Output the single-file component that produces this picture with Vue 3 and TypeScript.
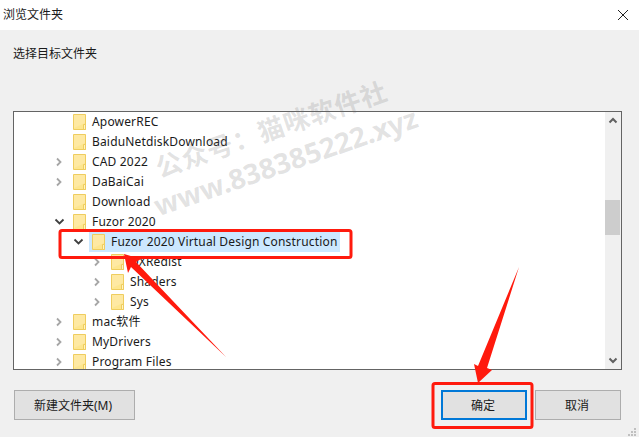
<script setup lang="ts">
interface Row { label: string; level: number; state: 'none' | 'closed' | 'open'; selected?: boolean }
const rows: Row[] = [
  { label: 'ApowerREC', level: 0, state: 'none' },
  { label: 'BaiduNetdiskDownload', level: 0, state: 'none' },
  { label: 'CAD 2022', level: 0, state: 'closed' },
  { label: 'DaBaiCai', level: 0, state: 'closed' },
  { label: 'Download', level: 0, state: 'none' },
  { label: 'Fuzor 2020', level: 0, state: 'open' },
  { label: 'Fuzor 2020 Virtual Design Construction', level: 1, state: 'open', selected: true },
  { label: 'DXRedist', level: 2, state: 'closed' },
  { label: 'Shaders', level: 2, state: 'closed' },
  { label: 'Sys', level: 2, state: 'closed' },
  { label: 'mac软件', level: 0, state: 'closed' },
  { label: 'MyDrivers', level: 0, state: 'closed' },
  { label: 'Program Files', level: 0, state: 'closed' },
]
const indent = (r: Row) => ({ paddingLeft: `${r.level * 19}px` })
</script>

<template>
  <div class="dialog">
    <header class="titlebar">
      <span class="title">浏览文件夹</span>
      <svg class="close" width="12" height="12" viewBox="0 0 12 12"><path d="M1 1 11 11M11 1 1 11" stroke="#222" stroke-width="1" fill="none" /></svg>
    </header>
    <main class="body">
      <p class="prompt">选择目标文件夹</p>
      <section class="tree">
        <div class="rows">
          <div v-for="r in rows" :key="r.label" class="row" :style="indent(r)">
            <span class="arrow">
              <svg v-if="r.state === 'closed'" width="9" height="10" viewBox="0 0 9 10"><path d="M2 1.5 5.5 5 2 8.5" stroke="#a6a6a6" stroke-width="1.8" fill="none" /></svg>
              <svg v-else-if="r.state === 'open'" width="11" height="8" viewBox="0 0 11 8"><path d="M1.5 1.5 5.5 5.5 9.5 1.5" stroke="#404040" stroke-width="1.8" fill="none" /></svg>
            </span>
            <span class="item" :class="{ selected: r.selected }">
              <svg class="folder" width="13" height="16" viewBox="0 0 13 16">
                <path d="M.5 .5H12.5V15.5H.5Z" fill="#fde68f" stroke="#efcd5f" />
                <path d="M1 1H12V9L1 14Z" fill="#fee9a3" />
                <path d="M10.5 15.5V10.5H12.5V15.5Z" fill="#fff3c4" stroke="#efcd5f" />
              </svg>
              <span class="label">{{ r.label }}</span>
            </span>
          </div>
        </div>
        <div class="scrollbar">
          <svg class="cap" width="16" height="17" viewBox="0 0 16 17"><path d="M4.5 10.5 8 7 11.5 10.5" stroke="#606060" stroke-width="2" fill="none" /></svg>
          <div class="track"><div class="thumb"></div></div>
          <svg class="cap" width="16" height="17" viewBox="0 0 16 17"><path d="M4.5 6.5 8 10 11.5 6.5" stroke="#606060" stroke-width="2" fill="none" /></svg>
        </div>
      </section>
      <footer class="actions">
        <button class="btn new">新建文件夹(M)</button>
        <span class="spacer"></span>
        <button class="btn ok">确定</button>
        <button class="btn">取消</button>
      </footer>
    </main>

    <svg class="grip" width="8" height="8" viewBox="0 0 8 8" fill="#c0c0c0">
      <rect x="6" y="0" width="2" height="2" /><rect x="3" y="3" width="2" height="2" /><rect x="6" y="3" width="2" height="2" />
      <rect x="0" y="6" width="2" height="2" /><rect x="3" y="6" width="2" height="2" /><rect x="6" y="6" width="2" height="2" />
    </svg>

    <div class="watermark">
      <div class="wm1">公众号：猫咪软件社</div>
      <div class="wm2">www.838385222.xyz</div>
    </div>

    <svg class="annot" width="639" height="437" viewBox="0 0 639 437">
      <rect x="60" y="230.5" width="291" height="27" rx="2" fill="none" stroke="#ff1a0d" stroke-width="3" />
      <rect x="433" y="383.5" width="99" height="44" rx="2" fill="none" stroke="#ff1a0d" stroke-width="3" />
      <path d="M124 254 141 259 136 262 226 357 131 267 128 273Z" fill="#ff1a0d" />
      <path d="M519 267 487 368 492 370 478 383 474 364 478 366Z" fill="#ff1a0d" />
    </svg>
  </div>
</template>

<style scoped>
.dialog {
  position: relative;
  width: 639px;
  height: 437px;
  overflow: hidden;
  display: flex;
  flex-direction: column;
  background: #f0f0f0;
  color: #1a1a1a;
  font-family: "Noto Sans", "Noto Sans CJK SC", sans-serif;
  font-size: 12px;
}
.titlebar {
  height: 30px;
  flex: none;
  background: #fff;
  display: flex;
  align-items: center;
  justify-content: space-between;
  padding: 0 10px 0 3px;
  box-sizing: border-box;
}
.title { line-height: 30px; }
.body {
  flex: 1;
  display: flex;
  flex-direction: column;
  padding: 0 17px 18px 13px;
  min-height: 0;
}
.prompt {
  margin: 15px 0 0;
  line-height: 18px;
  height: 66px;
  flex: none;
}
.tree {
  height: 259px;
  flex: none;
  box-sizing: border-box;
  border: 1px solid #646464;
  background: #fff;
  display: flex;
  overflow: hidden;
  width: 609px;
}
.rows { flex: 1; min-width: 0; }
.row {
  height: 20px;
  display: flex;
  align-items: center;
  margin-left: 35px;
}
.arrow {
  width: 21px;
  height: 20px;
  display: flex;
  align-items: center;
  justify-content: center;
  flex: none;
}
.item {
  display: flex;
  align-items: center;
  height: 20px;
  padding: 0 3px;
  gap: 6px;
}
.selected { background: #cce8ff; }
.folder { flex: none; }
.label { line-height: 20px; white-space: nowrap; letter-spacing: .17px; }
.scrollbar {
  width: 16px;
  flex: none;
  background: #f0f0f0;
  display: flex;
  flex-direction: column;
}
.cap { flex: none; display: block; }
.track { flex: 1; padding-top: 71px; }
.thumb { height: 35px; background: #cdcdcd; width: 15px; }
.actions {
  margin-top: 20px;
  display: flex;
  gap: 8px;
  padding: 0 1px;
  height: 30px;
}
.spacer { flex: 1; }
.btn {
  width: 86px;
  height: 30px;
  box-sizing: border-box;
  border: 1px solid #adadad;
  background: #e1e1e1;
  color: #1a1a1a;
  font: inherit;
  padding: 0 2px 0 0;
}
.new { width: 121px; padding-right: 3px; }
.ok { border: 2px solid #0078d7; }
.grip { position: absolute; right: 3px; bottom: 1px; }
.watermark {
  position: absolute;
  left: 130px;
  top: 110px;
  width: 300px;
  transform: rotate(-19deg);
  transform-origin: center;
  pointer-events: none;
  color: rgba(110, 110, 110, .2);
  font-weight: 700;
  white-space: nowrap;
  text-align: center;
}
.wm1 { font-size: 26px; line-height: 34px; margin-left: -6px; letter-spacing: 1px; }
.wm2 { font-size: 28px; line-height: 36px; }
.annot { position: absolute; inset: 0; pointer-events: none; }
</style>
